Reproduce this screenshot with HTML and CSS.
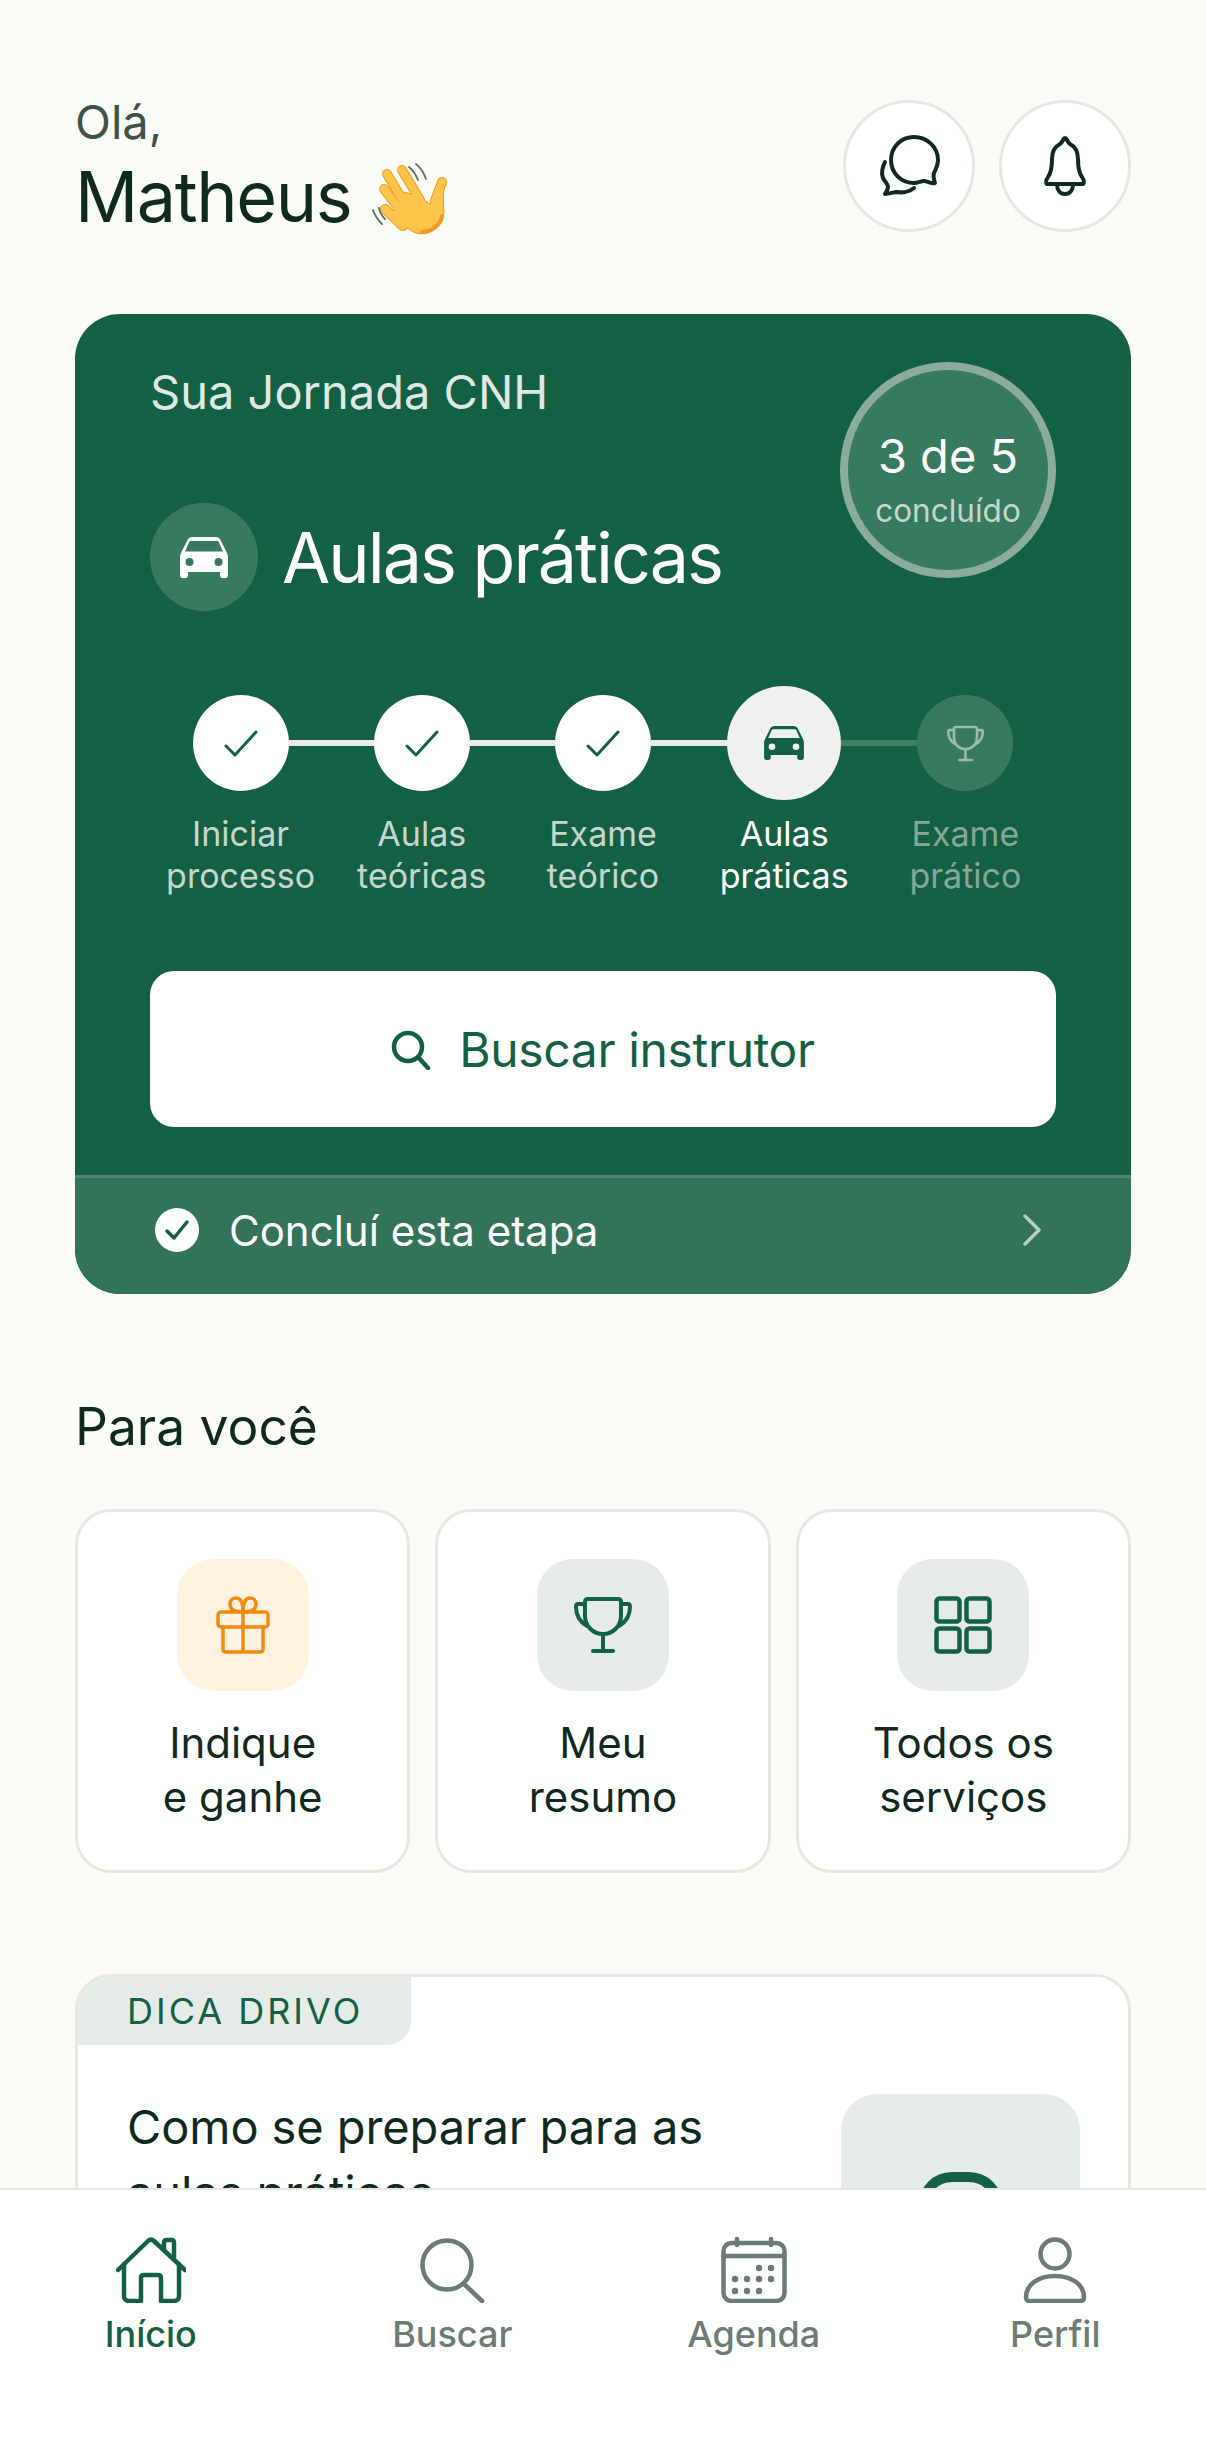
FILE: index.html
```html
<!DOCTYPE html>
<html lang="pt-BR">
<head>
    <meta charset="UTF-8">
    <meta name="viewport" content="width=device-width, initial-scale=1.0">
    <title>Início</title>
    <link rel="stylesheet" href="styles.css">
</head>
<body>
    <svg class="defs" width="0" height="0">
        <symbol id="car" viewBox="0 0 48 41">
            <path fill="currentColor" fill-rule="evenodd" d="M13 0H35C38 0 40 1 41 4L46 14C47 16 48 18 48 20V38C48 40 47 41 45 41H43C41 41 40 40 40 38V35H8V38C8 40 7 41 5 41H3C1 41 0 40 0 38V20C0 18 1 16 2 14L7 4C8 1 10 0 13 0ZM5 14.5H43L39 5.5C38.5 4.5 38 4 37 4H11C10 4 9.5 4.5 9 5.5ZM9.5 21a4 4 0 1 0 0 8a4 4 0 1 0 0-8ZM38.5 21a4 4 0 1 0 0 8a4 4 0 1 0 0-8Z"/>
        </symbol>
        <symbol id="check" viewBox="0 0 34 27">
            <path fill="none" stroke="currentColor" stroke-width="3" stroke-linecap="round" stroke-linejoin="round" d="M2 16l9 9L32 2"/>
        </symbol>
        <symbol id="trophy" viewBox="0 0 58 58">
            <path fill="none" stroke="currentColor" stroke-width="4" stroke-linecap="round" stroke-linejoin="round" d="M14 3h30c2 0 3 1 3 3v14c0 10-8 18-18 18s-18-8-18-18V6c0-2 1-3 3-3zM11 8H4c-2 0-2 1-2 3 0 8 4 15 11 19M47 8h7c2 0 2 1 2 3 0 8-4 15-11 19M29 38v17"/>
            <path fill="none" stroke="currentColor" stroke-width="4" stroke-linecap="round" d="M19 55h20"/>
        </symbol>
    </svg>

    <main class="page">
        <header class="top">
            <div class="greeting">
                <p class="hello">Olá,</p>
                <h1 class="name">Matheus
                    <svg class="wave" viewBox="0 0 80 76" role="img" aria-label="mão acenando">
                        <g fill="none" stroke="#f29a1e" stroke-width="10" stroke-linecap="round">
                            <path d="M16 12l20 33M31 8l18 30M13 27l20 26M14 47l18 17M71 20l-7 20"/>
                        </g>
                        <path fill="#fcc44b" stroke="#f29a1e" stroke-width="1" d="M34 30l16 6 9 6c1-6 3-12 7-20l8-2c-2 10-2 20-1 30 0 12-11 22-23 22-10 0-20-12-30-20z"/>
                        <g fill="none" stroke="#fcc44b" stroke-width="8" stroke-linecap="round">
                            <path d="M16 12l20 33M31 8l18 30M13 27l20 26M14 47l18 17M71 20l-7 20"/>
                        </g>
                        <path fill="none" stroke="#f29a1e" stroke-width="4" stroke-linecap="round" d="M71 54c-1 8-10 16-20 16"/>
                        <g fill="none" stroke="#5e6f67" stroke-width="1.8" stroke-linecap="round">
                            <path d="M38 5c5 4 7 8 9 13M45 2c5 4 8 9 10 15M2 48c2 6 5 10 9 14M8 46c1 5 3 8 6 11"/>
                        </g>
                    </svg>
                </h1>
            </div>
            <div class="top-actions">
                <button class="round-btn" aria-label="Mensagens">
                    <svg width="66" height="66" viewBox="0 0 66 66" fill="none" stroke="#10291f" stroke-width="4" stroke-linecap="round" stroke-linejoin="round">
                        <path d="M38 4c13 0 24 10 24 23 0 5-2 9-4 13-1 3 0 7 1 10-3 1-8-2-11-2-3 0-6 2-10 2-13 0-23-10-23-23S25 4 38 4z"/>
                        <path d="M9 29c-3 6-4 11-2 16 2 4 5 6 5 9 0 3-2 5-3 7 5 0 8-2 12-2 6 1 12 0 17-4"/>
                    </svg>
                </button>
                <button class="round-btn" aria-label="Notificações">
                    <svg width="66" height="66" viewBox="0 0 66 66" fill="none" stroke="#10291f" stroke-width="4" stroke-linecap="round" stroke-linejoin="round">
                        <path d="M33 5c2 0 2 4 5 6 6 3 8 8 8 15 0 8 1 14 4 18 2 3 3 5 1 7H15c-2-2-1-4 1-7 3-4 4-10 4-18 0-7 2-12 8-15 3-2 3-6 5-6z"/>
                        <path d="M25 51c0 6 3 10 8 10s8-4 8-10"/>
                    </svg>
                </button>
            </div>
        </header>

        <section class="journey">
            <div class="journey-body">
                <p class="journey-label">Sua Jornada CNH</p>
                <div class="journey-current">
                    <span class="car-badge"><svg class="car-big"><use href="#car"/></svg></span>
                    <h2 class="journey-title">Aulas práticas</h2>
                </div>
                <div class="progress">
                    <span class="progress-num">3 de 5</span>
                    <span class="progress-sub">concluído</span>
                </div>

                <ol class="steps">
                    <li class="step">
                        <div class="track"><span class="line line-none"></span><span class="dot"><svg class="check"><use href="#check"/></svg></span><span class="line"></span></div>
                        <span class="step-label">Iniciar<br>processo</span>
                    </li>
                    <li class="step">
                        <div class="track"><span class="line"></span><span class="dot"><svg class="check"><use href="#check"/></svg></span><span class="line"></span></div>
                        <span class="step-label">Aulas<br>teóricas</span>
                    </li>
                    <li class="step">
                        <div class="track"><span class="line"></span><span class="dot"><svg class="check"><use href="#check"/></svg></span><span class="line"></span></div>
                        <span class="step-label">Exame<br>teórico</span>
                    </li>
                    <li class="step step-active">
                        <div class="track"><span class="line"></span><span class="dot dot-active"><svg class="car-small"><use href="#car"/></svg></span><span class="line line-dim"></span></div>
                        <span class="step-label">Aulas<br>práticas</span>
                    </li>
                    <li class="step step-todo">
                        <div class="track"><span class="line line-dim"></span><span class="dot dot-todo"><svg class="trophy-small"><use href="#trophy"/></svg></span><span class="line line-none"></span></div>
                        <span class="step-label">Exame<br>prático</span>
                    </li>
                </ol>

                <button class="search-btn">
                    <svg width="40" height="40" viewBox="0 0 40 40" fill="none" stroke="currentColor" stroke-width="4.5" stroke-linecap="round"><circle cx="17" cy="17" r="14"/><path d="M27.5 27.5L37 38"/></svg>
                    <span>Buscar instrutor</span>
                </button>
            </div>
            <div class="journey-foot">
                <svg width="44" height="44" viewBox="0 0 44 44"><circle cx="22" cy="22" r="22" fill="#fff"/><path fill="none" stroke="#156045" stroke-width="3.5" stroke-linecap="round" stroke-linejoin="round" d="M12 23l7 7 13-16"/></svg>
                <span class="foot-text">Concluí esta etapa</span>
                <svg class="chevron" width="18" height="32" viewBox="0 0 18 32" fill="none" stroke="#fff" stroke-opacity=".65" stroke-width="3.5" stroke-linecap="round" stroke-linejoin="round"><path d="M2 2l14 14L2 30"/></svg>
            </div>
        </section>

        <h2 class="section-title">Para você</h2>
        <div class="tiles">
            <a class="tile">
                <span class="tile-icon tile-icon-orange">
                    <svg width="54" height="58" viewBox="0 0 54 58" fill="none" stroke="#f28c0f" stroke-width="3.5" stroke-linecap="round" stroke-linejoin="round">
                        <rect x="2" y="16" width="50" height="15" rx="3"/>
                        <path d="M7 31v22c0 2 1 3 3 3h34c2 0 3-1 3-3V31M27 16v40M27 16c-7 0-13-2-13-8 0-4 3-6 6-6 5 0 7 6 7 14zM27 16c7 0 13-2 13-8 0-4-3-6-6-6-5 0-7 6-7 14z"/>
                    </svg>
                </span>
                <span class="tile-text">Indique<br>e ganhe</span>
            </a>
            <a class="tile">
                <span class="tile-icon"><svg class="trophy-big"><use href="#trophy"/></svg></span>
                <span class="tile-text">Meu<br>resumo</span>
            </a>
            <a class="tile">
                <span class="tile-icon">
                    <svg width="58" height="58" viewBox="0 0 58 58" fill="none" stroke="#156045" stroke-width="4.5">
                        <rect x="2.5" y="2.5" width="23" height="23" rx="3"/>
                        <rect x="32.5" y="2.5" width="23" height="23" rx="3"/>
                        <rect x="2.5" y="32.5" width="23" height="23" rx="3"/>
                        <rect x="32.5" y="32.5" width="23" height="23" rx="3"/>
                    </svg>
                </span>
                <span class="tile-text">Todos os<br>serviços</span>
            </a>
        </div>

        <section class="tip">
            <span class="tip-tag">DICA DRIVO</span>
            <div class="tip-row">
                <h3 class="tip-title">Como se preparar para as aulas práticas</h3>
                <div class="tip-image"><span class="tip-shape"></span></div>
            </div>
        </section>
    </main>

    <nav class="tabbar">
        <a class="tab tab-active">
            <svg width="70" height="66" viewBox="0 0 70 66" fill="none" stroke="currentColor" stroke-width="4.5" stroke-linecap="round" stroke-linejoin="round">
                <path d="M2 33L32 4c2-2 4-2 6 0l31 29M48 12V5c0-1 1-2 2-2h6c1 0 2 1 2 2v17M8 27v32c0 3 2 5 5 5h12V41c0-2 1-3 3-3h14c2 0 3 1 3 3v23h13c3 0 5-2 5-5V27"/>
            </svg>
            <span class="tab-label">Início</span>
        </a>
        <a class="tab">
            <svg width="66" height="66" viewBox="0 0 66 66" fill="none" stroke="currentColor" stroke-width="4.5" stroke-linecap="round"><circle cx="28" cy="28" r="24.5"/><path d="M45 47l18 17"/></svg>
            <span class="tab-label">Buscar</span>
        </a>
        <a class="tab">
            <svg width="66" height="66" viewBox="0 0 66 66" fill="none" stroke="currentColor" stroke-width="4.5" stroke-linecap="round">
                <rect x="2.5" y="6" width="61" height="58" rx="8"/>
                <path d="M2.5 19h61M16 2v6M50 2v6"/>
                <g fill="currentColor" stroke="none">
                    <circle cx="38" cy="31" r="3.2"/><circle cx="50" cy="31" r="3.2"/>
                    <circle cx="14" cy="42" r="3.2"/><circle cx="26" cy="42" r="3.2"/><circle cx="38" cy="42" r="3.2"/><circle cx="50" cy="42" r="3.2"/>
                    <circle cx="14" cy="54" r="3.2"/><circle cx="26" cy="54" r="3.2"/><circle cx="38" cy="54" r="3.2"/>
                </g>
            </svg>
            <span class="tab-label">Agenda</span>
        </a>
        <a class="tab">
            <svg width="66" height="66" viewBox="0 0 66 66" fill="none" stroke="currentColor" stroke-width="4.5" stroke-linecap="round" stroke-linejoin="round">
                <circle cx="33" cy="17" r="14.5"/>
                <path d="M4 60c0-13 13-21 29-21s29 8 29 21c0 3-1 4-4 4H8c-3 0-4-1-4-4z"/>
            </svg>
            <span class="tab-label">Perfil</span>
        </a>
    </nav>
</body>
</html>
```

FILE: styles.css
```css
* {
    box-sizing: border-box;
}

html,
body {
    margin: 0;
    padding: 0;
    height: 2452px;
    overflow: hidden;
}

body {
    font-family: Inter, "Liberation Sans", sans-serif;
    background-color: #fbfbf7;
    color: #10291f;
}

h1, h2, h3, p, ol {
    margin: 0;
    padding: 0;
    font-weight: 400;
}

ol {
    list-style: none;
}

.defs {
    position: absolute;
}

.page {
    padding: 100px 75px 0 75px;
}

/* header */
.top {
    display: flex;
    justify-content: space-between;
    height: 131px;
}

.hello {
    font-size: 47px;
    line-height: 52px;
    color: #3f5249;
    margin-top: -4px;
}

.name {
    display: flex;
    align-items: center;
    gap: 20px;
    font-size: 70px;
    line-height: 80px;
    letter-spacing: -1.4px;
    margin-top: 8px;
}

.wave {
    width: 80px;
    height: 76px;
    margin-top: 6px;
}

.top-actions {
    display: flex;
    gap: 24px;
}

.round-btn {
    display: flex;
    align-items: center;
    justify-content: center;
    width: 132px;
    height: 132px;
    padding: 0;
    border: 3px solid #e8e7df;
    border-radius: 50%;
    background-color: #fff;
}

/* journey card */
.journey {
    margin-top: 83px;
    border-radius: 45px;
    overflow: hidden;
    background-color: #146044;
    color: #fff;
}

.journey-body {
    position: relative;
    padding: 48px 75px;
}

.journey-label {
    font-size: 47px;
    line-height: 60px;
    color: #dfe8e3;
}

.journey-current {
    display: flex;
    align-items: center;
    gap: 24px;
    margin-top: 81px;
}

.car-badge {
    display: flex;
    align-items: center;
    justify-content: center;
    width: 108px;
    height: 108px;
    border-radius: 50%;
    background-color: #387a5e;
}

.car-big {
    width: 48px;
    height: 41px;
    color: #fff;
}

.journey-title {
    padding-top: 2px;
    font-size: 70px;
    line-height: 80px;
    letter-spacing: -2px;
}

.progress {
    position: absolute;
    top: 48px;
    right: 75px;
    display: flex;
    flex-direction: column;
    align-items: center;
    justify-content: center;
    width: 216px;
    height: 216px;
    padding-top: 18px;
    border: 8px solid #8bab9c;
    border-radius: 50%;
    background-color: #387a5e;
}

.progress-num {
    font-size: 47px;
    line-height: 56px;
}

.progress-sub {
    margin-top: 7px;
    font-size: 31.5px;
    line-height: 40px;
    color: #c6d6cd;
}

.steps {
    display: grid;
    grid-template-columns: repeat(5, 1fr);
    margin-top: 75px;
}

.step {
    display: flex;
    flex-direction: column;
    align-items: center;
}

.track {
    display: flex;
    align-items: center;
    width: 100%;
    height: 114px;
}

.line {
    flex: 1;
    height: 6px;
    background-color: #e8ece9;
}

.line-none {
    visibility: hidden;
}

.line-dim {
    background-color: #3f7f63;
}

.dot {
    display: flex;
    align-items: center;
    justify-content: center;
    flex: none;
    width: 96px;
    height: 96px;
    border-radius: 50%;
    background-color: #fff;
    color: #146044;
}

.dot-active {
    width: 114px;
    height: 114px;
    background-color: #eef1ee;
}

.dot-todo {
    background-color: #387a5e;
    color: #9dbaac;
}

.check {
    width: 34px;
    height: 27px;
}

.car-small {
    width: 40px;
    height: 34px;
}

.trophy-small {
    width: 37px;
    height: 37px;
}

.step-label {
    margin-top: 13px;
    font-size: 34px;
    line-height: 42px;
    text-align: center;
    color: #c6d6cd;
    white-space: nowrap;
}

.step-active .step-label {
    color: #fff;
}

.step-todo .step-label {
    color: #86a797;
}

.search-btn {
    display: flex;
    align-items: center;
    justify-content: center;
    gap: 28px;
    width: 100%;
    height: 156px;
    margin-top: 74px;
    padding-top: 2px;
    border: none;
    border-radius: 24px;
    background-color: #fff;
    color: #146044;
    font-family: inherit;
    font-size: 48px;
    letter-spacing: -0.35px;
}

.journey-foot {
    display: flex;
    align-items: center;
    height: 119px;
    padding: 0 90px 12px 80px;
    border-top: 3px solid #4f8770;
    background-color: #337358;
}

.foot-text {
    flex: 1;
    margin-left: 30px;
    font-size: 42px;
}

/* para voce */
.section-title {
    margin-top: 102px;
    font-size: 51.5px;
    line-height: 60px;
}

.tiles {
    display: grid;
    grid-template-columns: repeat(3, 1fr);
    gap: 25px;
    margin-top: 53px;
}

.tile {
    display: flex;
    flex-direction: column;
    align-items: center;
    height: 364px;
    padding-top: 47px;
    border: 3px solid #e8e7df;
    border-radius: 36px;
    background-color: #fff;
}

.tile-icon {
    display: flex;
    align-items: center;
    justify-content: center;
    width: 132px;
    height: 132px;
    border-radius: 36px;
    background-color: #e5ece7;
}

.tile-icon-orange {
    background-color: #fff2e1;
}

.trophy-big {
    width: 58px;
    height: 58px;
    color: #146044;
}

.tile-text {
    margin-top: 25px;
    font-size: 42px;
    line-height: 54px;
    text-align: center;
}

/* dica */
.tip {
    margin-top: 101px;
    height: 500px;
    border: 3px solid #e8e7df;
    border-radius: 36px;
    overflow: hidden;
    background-color: #fff;
}

.tip-tag {
    display: block;
    width: 333px;
    height: 68px;
    padding-left: 49px;
    border-bottom-right-radius: 24px;
    background-color: #e5ece7;
    color: #146044;
    font-size: 36px;
    line-height: 68px;
    letter-spacing: 3px;
}

.tip-row {
    display: flex;
    justify-content: space-between;
    padding: 0 48px 0 49px;
}

.tip-title {
    width: 620px;
    margin-top: 49px;
    font-size: 47px;
    line-height: 66px;
    letter-spacing: -0.1px;
}

.tip-image {
    display: flex;
    justify-content: center;
    width: 239px;
    height: 239px;
    margin-top: 49px;
    border-radius: 36px;
    background-color: #e5ece7;
}

.tip-shape {
    width: 85px;
    height: 70px;
    margin-top: 78px;
    border: 10px solid #146044;
    border-bottom: none;
    border-radius: 34px 34px 0 0;
}

/* tab bar */
.tabbar {
    position: fixed;
    left: 0;
    right: 0;
    bottom: 0;
    display: grid;
    grid-template-columns: repeat(4, 1fr);
    height: 264px;
    border-top: 2px solid #e8e7df;
    background-color: #fff;
}

.tab {
    display: flex;
    flex-direction: column;
    align-items: center;
    padding-top: 47px;
    color: #6c7b73;
}

.tab-active {
    color: #146044;
}

.tab-label {
    margin-top: 10px;
    font-size: 36px;
    font-weight: 500;
    line-height: 42px;
}
```
